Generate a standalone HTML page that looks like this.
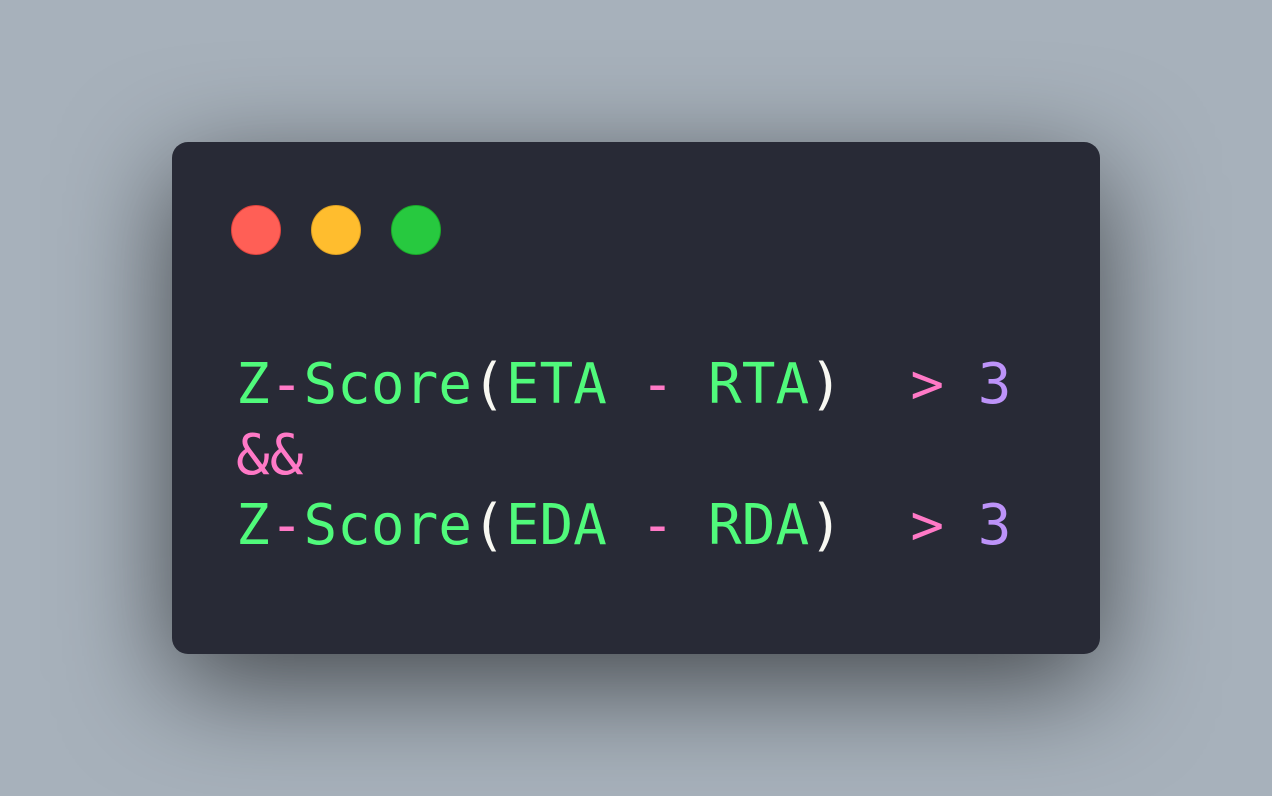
<!DOCTYPE html>
<html><head><meta charset="utf-8"><style>
html,body{margin:0;padding:0;}
body{width:1272px;height:796px;background:#a7b1bb;position:relative;overflow:hidden;}
.card{position:absolute;left:172px;top:142px;width:928px;height:512px;background:#282a36;border-radius:16px;box-shadow:0 30px 110px rgba(0,0,0,0.6);}
.dot{position:absolute;top:63px;width:48px;height:48px;border-radius:50%;}
.r{left:59px;background:#ff5f56;border:1px solid #e0443e;}
.y{left:139px;background:#ffbd2e;border:1px solid #dea123;}
.g{left:219px;background:#27c93f;border:1px solid #1aab29;}
pre{position:absolute;left:64px;top:208px;margin:0;font-family:"DejaVu Sans Mono","Liberation Mono",monospace;font-size:56px;line-height:70.5px;color:#50fa7b;}
.p{color:#ff79c6}.w{color:#f8f8f2}.n{color:#bd93f9}
</style></head><body>
<div class="card">
<div class="dot r"></div><div class="dot y"></div><div class="dot g"></div>
<pre>Z<span class="p">-</span>Score<span class="w">(</span>ETA <span class="p">-</span> RTA<span class="w">)</span>  <span class="p">&gt;</span> <span class="n">3</span>
<span class="p">&amp;&amp;</span>
Z<span class="p">-</span>Score<span class="w">(</span>EDA <span class="p">-</span> RDA<span class="w">)</span>  <span class="p">&gt;</span> <span class="n">3</span></pre>
</div>
</body></html>
